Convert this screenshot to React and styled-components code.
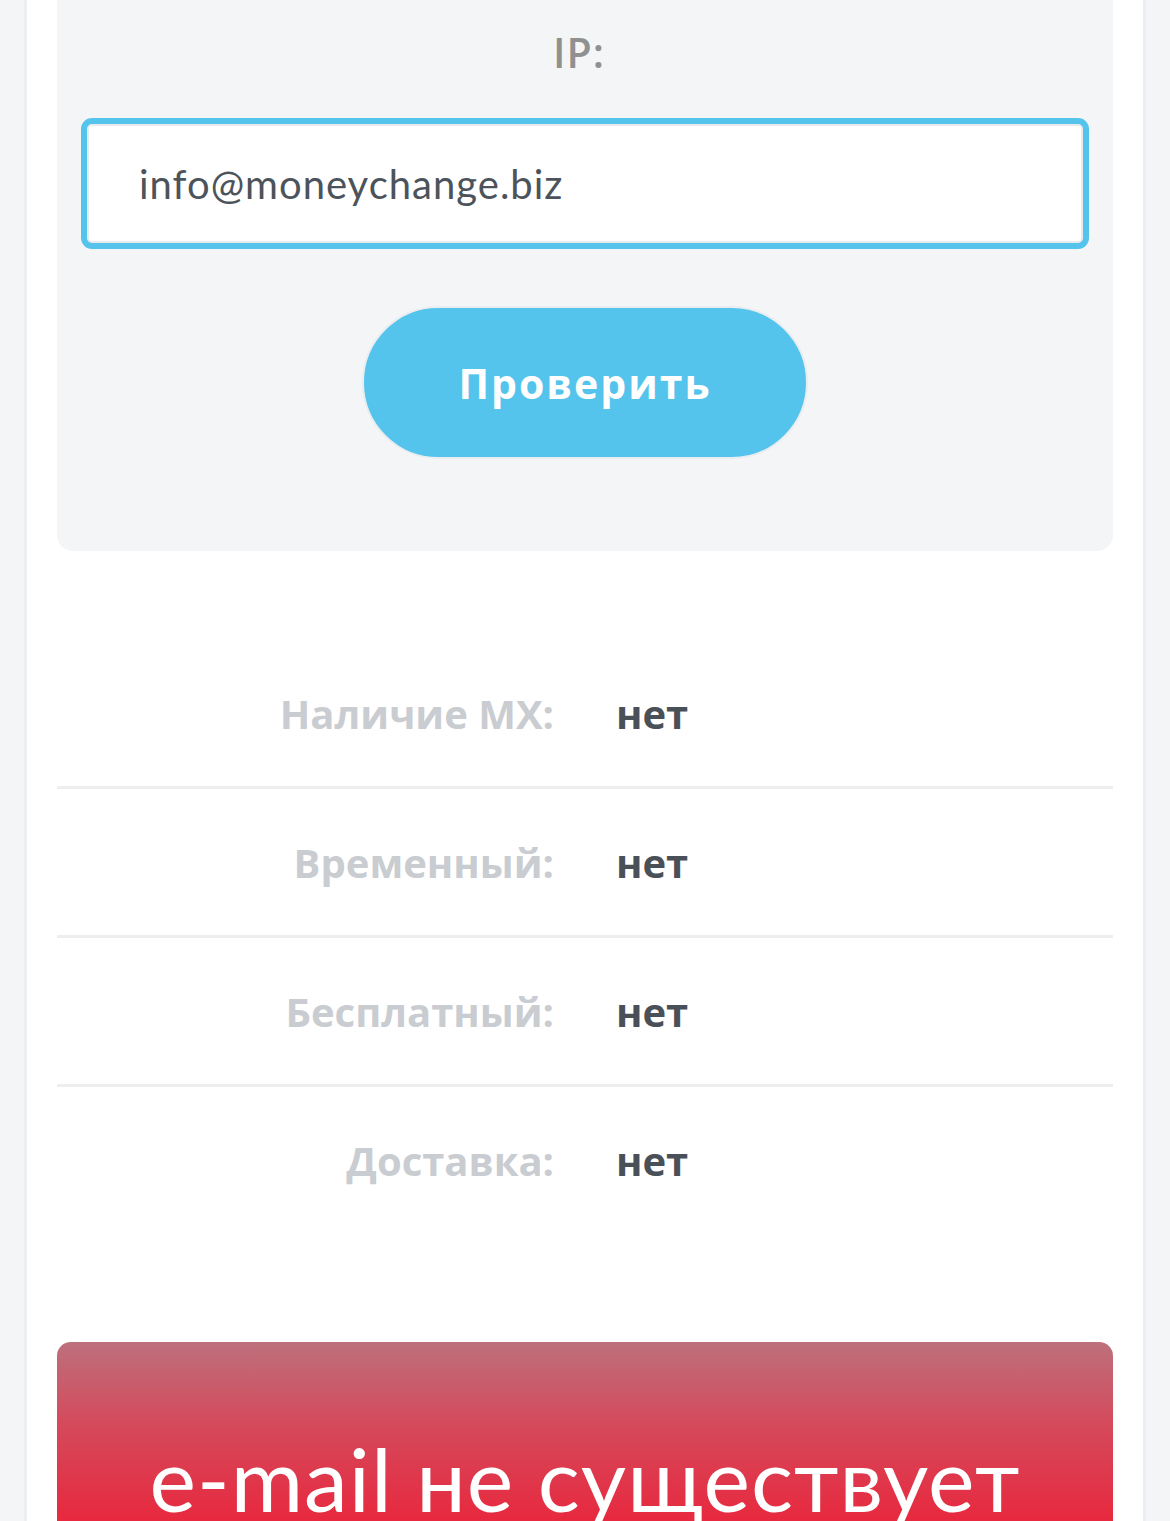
import styled, { createGlobalStyle } from "styled-components";

const rows = [
  { label: "Наличие MX:", value: "нет" },
  { label: "Временный:", value: "нет" },
  { label: "Бесплатный:", value: "нет" },
  { label: "Доставка:", value: "нет" },
];

function App() {
  return (
    <>
      <GlobalStyle />
      <S.Page>
        <S.Panel>
          <S.Form>
            <S.FieldLabel>IP:</S.FieldLabel>
            <S.Input defaultValue="info@moneychange.biz" />
            <S.Button type="button">Проверить</S.Button>
          </S.Form>
          <S.Results>
            {rows.map((row) => (
              <S.Row key={row.label}>
                <S.RowLabel>{row.label}</S.RowLabel>
                <S.RowValue>{row.value}</S.RowValue>
              </S.Row>
            ))}
          </S.Results>
          <S.Verdict>e-mail не существует</S.Verdict>
        </S.Panel>
      </S.Page>
    </>
  );
}
export default App;

const GlobalStyle = createGlobalStyle`
  body {
    margin: 0;
    background: #f4f5f7;
    font-family: "Open Sans", sans-serif;
    overflow: hidden;
  }
`;

const Page = styled.div`
  padding: 0 24px;
  height: 1521px;
  overflow: hidden;
`;

const Panel = styled.div`
  background: #ffffff;
  border-left: 3px solid #eceef1;
  border-right: 3px solid #eceef1;
  padding: 0 30px;
  min-height: 1521px;
`;

const Form = styled.div`
  background: #f4f5f7;
  border-radius: 0 0 16px 16px;
  padding: 24px 24px 92px;
  display: flex;
  flex-direction: column;
  align-items: center;
`;

const FieldLabel = styled.div`
  height: 56px;
  line-height: 56px;
  margin-right: 12px;
  font-size: 41px;
  font-weight: 600;
  letter-spacing: 1px;
  color: #8f9191;
`;

const Input = styled.input`
  box-sizing: border-box;
  width: 100%;
  height: 131px;
  margin-top: 38px;
  padding: 0 0 0 52px;
  border: 6px solid #54c4ec;
  border-radius: 11px;
  box-shadow: inset 0 0 0 2px #e8eaed;
  background: #ffffff;
  font-family: "Lato", sans-serif;
  font-size: 40px;
  letter-spacing: 1px;
  color: #4d535b;
  outline: none;
`;

const Button = styled.button`
  box-sizing: border-box;
  width: 446px;
  height: 153px;
  margin-top: 57px;
  border: 2px solid #eaedf0;
  border-radius: 77px;
  background: #54c4ec;
  color: #ffffff;
  font-family: "Open Sans", sans-serif;
  font-size: 41px;
  font-weight: 700;
  letter-spacing: 2px;
  cursor: pointer;
`;

const Results = styled.div`
  margin-top: 89px;
`;

const Row = styled.div`
  display: grid;
  grid-template-columns: 1fr 1fr;
  column-gap: 62px;
  align-items: center;
  height: 146px;
  border-bottom: 3px solid #eeeeee;
  &:last-child {
    border-bottom: none;
  }
`;

const RowLabel = styled.div`
  text-align: right;
  font-size: 40px;
  font-weight: 700;
  color: #c9ccd0;
`;

const RowValue = styled.div`
  font-size: 40px;
  font-weight: 700;
  color: #4a5058;
`;

const Verdict = styled.div`
  margin-top: 109px;
  height: 300px;
  border-radius: 14px 14px 0 0;
  padding-top: 84px;
  box-sizing: border-box;
  background: linear-gradient(180deg, #bd707c 0%, #d44a5c 45%, #e8283e 100%);
  background-size: 100% 180px;
  background-repeat: no-repeat;
  background-color: #e8283e;
  text-align: center;
  color: #ffffff;
  font-family: "Lato", sans-serif;
  font-size: 88px;
  letter-spacing: 1px;
  line-height: 1.2;
  white-space: nowrap;
`;

const S = {
  Page,
  Panel,
  Form,
  FieldLabel,
  Input,
  Button,
  Results,
  Row,
  RowLabel,
  RowValue,
  Verdict,
};
